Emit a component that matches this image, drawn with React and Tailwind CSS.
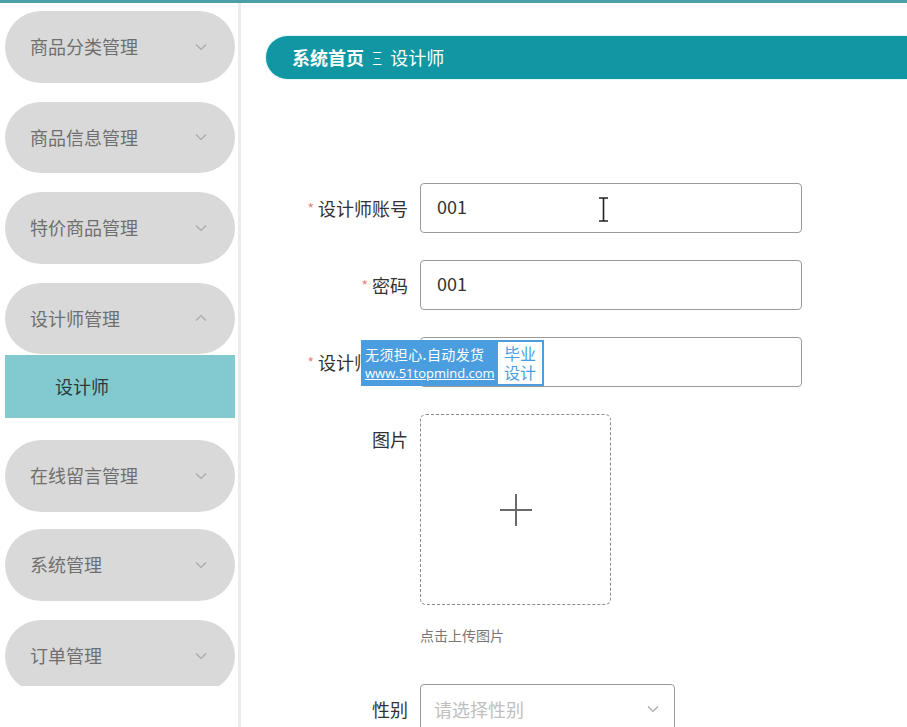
import React from 'react';

const font = { fontFamily: '"Noto Sans CJK SC", "Noto Sans", sans-serif' };

const Chevron = ({ up }) => (
    <svg width="12" height="8" viewBox="0 0 12 8" fill="none" stroke="#a8a8a8" strokeWidth="1.2">
        {up ? <path d="M1 6.5 L6 1.5 L11 6.5" /> : <path d="M1 1.5 L6 6.5 L11 1.5" />}
    </svg>
);

const Pill = ({ label, up }) => (
    <div className="ml-[5px] w-[230px] h-[71.5px] rounded-full bg-[#d9d9d9] flex items-center justify-between pl-[25px] pr-[28px]">
        <span className="text-[18px] text-[#6f6f6f]">{label}</span>
        <Chevron up={up} />
    </div>
);

const Sidebar = () => (
    <aside className="w-[241px] shrink-0 border-r-[3px] border-[#ececec] bg-white">
        <div className="h-[683px] overflow-hidden pt-[8px]">
            <div className="mb-[19px]"><Pill label="商品分类管理" /></div>
            <div className="mb-[19px]"><Pill label="商品信息管理" /></div>
            <div className="mb-[19px]"><Pill label="特价商品管理" /></div>
            <div className="mb-[22px]">
                <Pill label="设计师管理" up />
                <div className="ml-[5px] w-[230px] mt-[1px] h-[63px] bg-[#82c9d0] flex items-center pl-[50px]">
                    <span className="text-[18px] text-[#2b3b3d]">设计师</span>
                </div>
            </div>
            <div className="mb-[17.5px]"><Pill label="在线留言管理" /></div>
            <div className="mb-[19.5px]"><Pill label="系统管理" /></div>
            <div><Pill label="订单管理" /></div>
        </div>
    </aside>
);

const Label = ({ text, required }) => (
    <div className="w-[154px] shrink-0 h-[50px] flex items-center justify-end pr-[12px] text-[18px] text-[#333]">
        {required && <span className="text-[#f08080] text-[14px] mr-[4px]">*</span>}
        {text}
    </div>
);

const Field = ({ label, value, required }) => (
    <div className="flex mb-[27px]">
        <Label text={label} required={required} />
        <div className="w-[382px] h-[50px] border border-[#9a9a9a] rounded-[4px] flex items-center px-[16px] pb-[3px] text-[18px] text-[#333]">
            {value}
        </div>
    </div>
);

const App = () => {
    return (
        <div className="relative w-[907px] h-[727px] overflow-hidden bg-white" style={font}>
            <div className="h-[3px] bg-[#4a9fa8]" />
            <div className="flex h-[724px]">
                <Sidebar />
                <main className="flex-1 pl-[25px]">
                    <div className="mt-[33px] h-[43px] rounded-l-full bg-[#1197a4] shadow-[0_0_2px_#8de0e6] flex items-center pl-[26px] text-white text-[18px]">
                        <span className="font-bold">系统首页</span>
                        <span className="mx-[8px] text-[18px] font-light">Ξ</span>
                        <span>设计师</span>
                    </div>

                    <div className="mt-[104px]">
                        <Field label="设计师账号" value="001" required />
                        <Field label="密码" value="001" required />
                        <Field label="设计师姓名" value="" required />

                        <div className="flex">
                            <Label text="图片" />
                            <div>
                                <div className="w-[191px] h-[191px] border border-dashed border-[#8a8a8a] rounded-[6px] flex items-center justify-center">
                                    <svg width="34" height="34" viewBox="0 0 34 34" stroke="#6a6a6a" strokeWidth="2">
                                        <path d="M17 1 V33 M1 17 H33" />
                                    </svg>
                                </div>
                                <div className="mt-[20px] text-[14px] text-[#777]">点击上传图片</div>
                            </div>
                        </div>

                        <div className="flex mt-[38px]">
                            <Label text="性别" />
                            <div className="w-[255px] h-[50px] border border-[#9a9a9a] rounded-[4px] flex items-center justify-between pl-[13px] pr-[15px]">
                                <span className="text-[18px] text-[#c0c0c0]">请选择性别</span>
                                <Chevron />
                            </div>
                        </div>
                    </div>
                </main>
            </div>

            {/* watermark overlay */}
            <div className="absolute left-[361px] top-[340px] flex h-[46px]">
                <div className="w-[135px] bg-[#4a9ee0] text-white flex flex-col justify-center items-start pl-[4px]">
                    <span className="text-[14px] leading-[20px] tracking-[0.4px] whitespace-nowrap">无须担心.自动发货</span>
                    <span className="text-[13px] leading-[18px] underline whitespace-nowrap" style={{ fontFamily: '"Open Sans", sans-serif' }}>www.51topmind.com</span>
                </div>
                <div className="w-[48px] bg-white border-2 border-[#4a9ee0] text-[#4a9ee0] flex flex-col justify-center items-center text-[16px] leading-[19px]">
                    <span>毕业</span>
                    <span>设计</span>
                </div>
            </div>

            {/* text cursor */}
            <svg className="absolute left-[598px] top-[197px]" width="11" height="25" viewBox="0 0 11 25" stroke="#222" strokeWidth="1.6" fill="none">
                <path d="M1 1 H10 M5.5 1 V24 M1 24 H10" />
            </svg>
        </div>
    );
};

export default App;
